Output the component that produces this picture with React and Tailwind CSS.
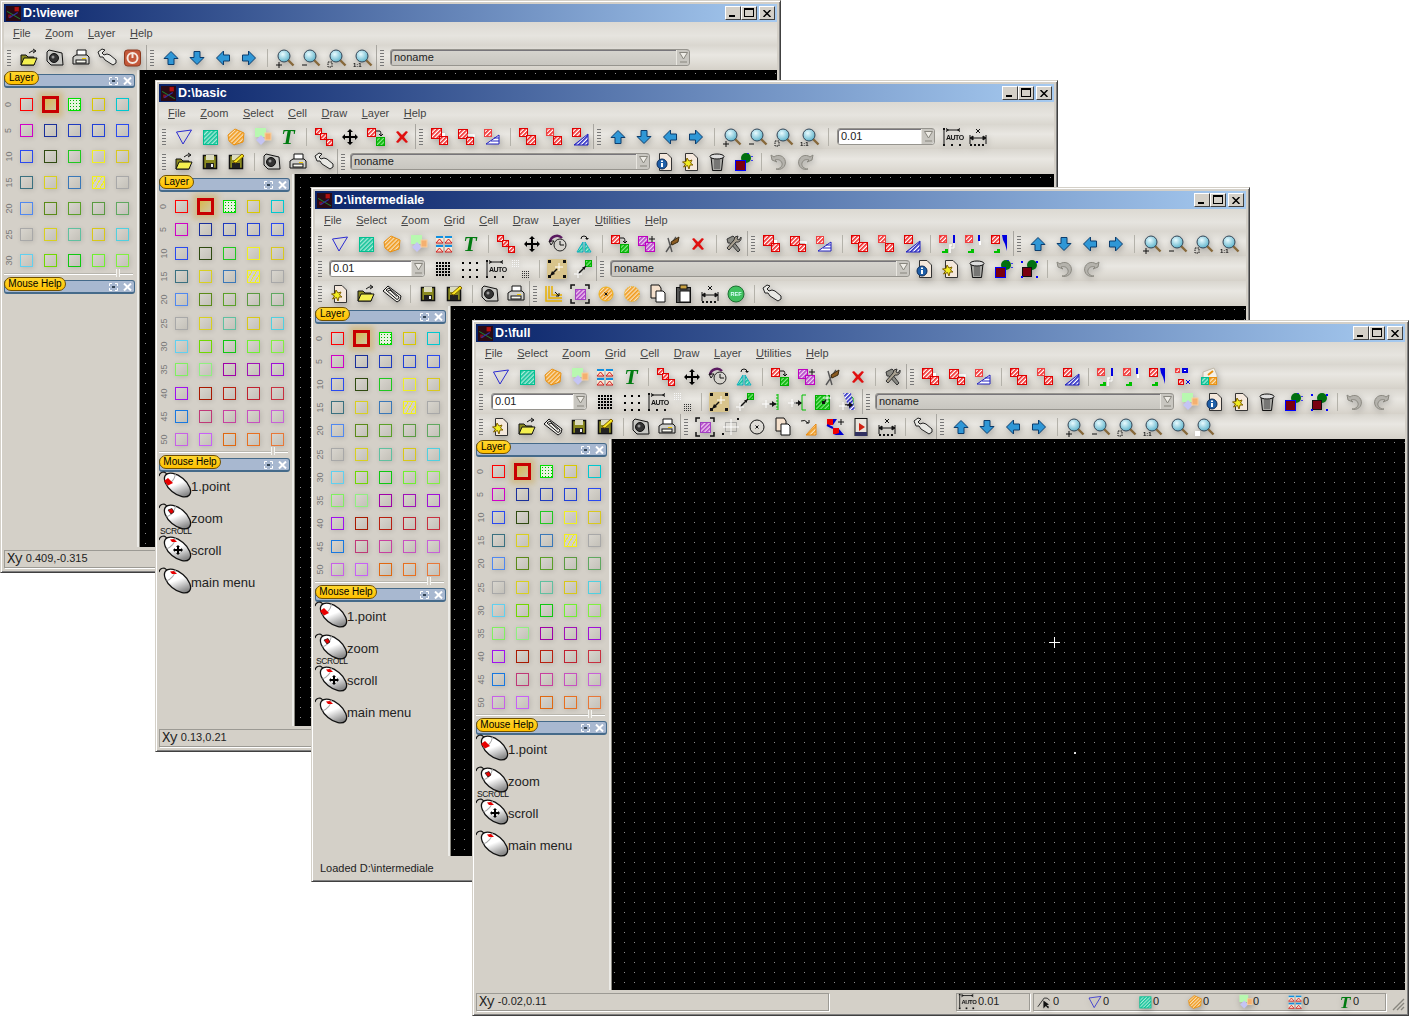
import React from "react";

const Sq = ({ x, y, s = 8, c = "#e00000", f = "hr" }) => (
    <rect x={x + 0.5} y={y + 0.5} width={s} height={s} fill={`url(#${f})`} stroke={c} />
);
const Arrow = ({ r }) => (
    <path transform={`rotate(${r} 10 10)`} d="M10 3.5L17 10.5H13V16.5H7V10.5H3Z" fill="#2f97d6" stroke="#0b3d6e" />
);
const Mag = ({ children }) => (
    <>
        <path d="M13 12L18.5 17.5" stroke="#86683a" strokeWidth="2.4" />
        <circle cx="9" cy="8" r="6" fill="url(#lens)" stroke="#345" />
        {children}
    </>
);
const Dots = ({ n, step, s, x = 2, y = 2, c = "#000" }) => (
    <>
        {Array.from({ length: n * n }).map((_, i) => (
            <rect key={i} x={x + (i % n) * step} y={y + Math.floor(i / n) * step} width={s} height={s} fill={c} />
        ))}
    </>
);
const Cross = ({ x, y, c = "#fff" }) => (
    <path d={`M${x - 4} ${y}H${x + 4}M${x} ${y - 4}V${y + 4}`} stroke={c} />
);
const Page = ({ f = "#f4e8dc" }) => <path d="M4.5 1.5H12L16.5 6V18.5H4.5Z" fill={f} stroke="#333" />;
const Steps = ({ c = "#00c000" }) => <path d="M1 19h3v-2h3v-2h3v4z" fill={c} />;

const ICONS = {
    line: <path d="M2.5 5L17.5 3L9 17Z" fill="none" stroke="#2a2ad0" />,
    rect: <Sq x={3} y={3} s={14} c="#00c090" f="ht" />,
    poly: <path d="M2 8L9 2L18 6L17 15L8 18L3 14Z" fill="url(#ho)" stroke="#e89010" />,
    shapes: (
        <>
            <rect x="3" y="1" width="11" height="9" fill="#b8f8b0" />
            <path d="M9 8L14 13L9 18L4 13Z" fill="#c4c4f4" />
            <rect x="13" y="6" width="6" height="7" fill="#f4b070" stroke="#f8d0a0" />
        </>
    ),
    array: (
        <>
            {[[2, 2], [11, 2], [2, 11], [11, 11]].map(([x, y]) => (
                <g key={`${x}${y}`}>
                    <rect x={x} y={y} width="7" height="7" fill="#f4ead8" />
                    <rect x={x} y={y} width="7" height="2" fill="#1090e0" />
                    <path d={`M${x} ${y + 7}L${x + 3.5} ${y + 3}L${x + 7} ${y + 7}Z`} fill="#f8d8c8" stroke="#d02020" />
                </g>
            ))}
        </>
    ),
    T: (
        <text x="10" y="17" textAnchor="middle" fontFamily="Liberation Serif" fontWeight="700" fontStyle="italic" fontSize="22" fill="#007a10">
            T
        </text>
    ),
    copy3: (
        <>
            <Sq x={1} y={1} s={6} />
            <Sq x={6} y={6} s={6} />
            <Sq x={12} y={12} s={6} />
        </>
    ),
    move: <path d="M10 2L13 5H11V9H15V7L18 10L15 13V11H11V15H13L10 18L7 15H9V11H5V13L2 10L5 7V9H9V5H7Z" fill="#000" />,
    rotate: (
        <>
            <path d="M2 8A7 7 0 0 1 14 4" fill="none" stroke="#5a1a60" strokeWidth="2.5" />
            <circle cx="12" cy="11" r="6" fill="none" stroke="#222" />
            <path d="M12 7V11H16M1 7H6L3 11Z" fill="none" stroke="#111" />
        </>
    ),
    mirror: (
        <>
            <path d="M9 8L3 18H9ZM11 8L17 18H11Z" fill="url(#ht)" stroke="#10b0c0" />
            <path d="M7 5A3 3 0 0 1 13 5" fill="none" stroke="#111" />
            <path d="M13 6L11 4H15Z" fill="#111" />
        </>
    ),
    moveTo: (
        <>
            <Sq x={1} y={1} />
            <Sq x={10} y={10} c="#00b000" f="hg" />
            <path d="M10 4H14Q15 5 15 8M13 7L15 9L17 7" fill="none" stroke="#111" />
        </>
    ),
    copyMulti: (
        <>
            <Sq x={2} y={2} s={9} c="#c000c0" f="hp" />
            <Sq x={9} y={8} s={9} c="#c000c0" f="hp" />
            <path d="M13 5H19M16 2V8" stroke="#111" />
        </>
    ),
    cut: (
        <>
            <path d="M4 18L14 3M10 18L6 4" stroke="#555" strokeWidth="1.4" />
            <path d="M9 8L17 3L16 8L10 11Z" fill="#8a5a20" stroke="#3a2a10" />
        </>
    ),
    del: <path d="M4 5L6 4L10 8L14 4L16 5L12 10L16 15L14 16L10 12L6 16L4 15L8 10Z" fill="#e01010" />,
    tools: (
        <>
            <path d="M3 5L9 2L12 5L9 7L16 16L14 18L6 9L4 9Z" fill="#8a8a84" stroke="#333" />
            <path d="M17 3A4 4 0 0 1 12 8L5 16L3 14L10 6A4 4 0 0 1 14 2L13 5L15 6Z" fill="#a8a090" stroke="#333" />
        </>
    ),
    b1: (
        <>
            <Sq x={1} y={1} s={10} />
            <Sq x={9} y={9} s={8} />
            <rect x="12" y="6" width="3" height="3" fill="#fff" />
        </>
    ),
    b2: (
        <>
            <Sq x={2} y={2} s={9} />
            <Sq x={10} y={10} s={7} f="hr" />
            <path d="M11.5 8H18V10" fill="none" stroke="#fff" strokeWidth="1.5" />
        </>
    ),
    b3: (
        <>
            <Sq x={2} y={2} s={7} c="#f04040" />
            <path d="M17 8V17H4Z" fill="#fff" stroke="#2020c0" />
            <path d="M12 11H17M9 14H17" stroke="#2020c0" />
        </>
    ),
    b4: (
        <>
            <Sq x={1} y={1} s={8} />
            <Sq x={8} y={8} s={9} />
        </>
    ),
    b5: (
        <>
            <Sq x={2} y={1} s={7} c="#f04040" />
            <Sq x={9} y={9} s={8} />
        </>
    ),
    b6: (
        <>
            <Sq x={2} y={1} s={8} />
            <path d="M18 7V18H4Z" fill="url(#hb)" stroke="#2020c0" />
        </>
    ),
    s1: (
        <>
            <Sq x={1} y={1} s={7} c="#f04040" />
            <Steps />
            <path d="M14 11H12V19" fill="none" stroke="#fff" strokeWidth="1.5" />
            <path d="M16 1V9" stroke="#0000e0" strokeWidth="2" />
            <path d="M16 9V14H13" fill="none" stroke="#fff" />
        </>
    ),
    s2: (
        <>
            <Sq x={1} y={1} s={7} c="#f04040" />
            <Steps />
            <path d="M15 1V7" stroke="#0000e0" strokeWidth="2" />
            <path d="M16 7V11" stroke="#fff" strokeWidth="2" />
        </>
    ),
    s3: (
        <>
            <Sq x={1} y={1} s={8} />
            <Steps />
            <path d="M12 1H17V17L15 10L13 6Z" fill="#0000e0" />
        </>
    ),
    s4: (
        <>
            <Sq x={1} y={1} s={4} c="#f04040" />
            <rect x="8" y="1" width="6" height="5" fill="#0000e0" />
            <rect x="10" y="3" width="2" height="1" fill="#fff" />
            <Sq x={4} y={12} s={5} c="#e00000" />
            <path d="M12 13L16 17M16 13L12 17" stroke="#0000e0" />
        </>
    ),
    s5: (
        <>
            <path d="M3 5L14 1L17 8L17 18H3Z" fill="#f4f0e8" stroke="#c0b8a8" />
            <Sq x={1} y={10} s={7} c="#00c090" f="ht" />
            <Sq x={9} y={10} s={7} c="#e89010" f="ho" />
            <path d="M8 8L13 4" stroke="#e89010" strokeWidth="2" />
        </>
    ),
    dense: <Dots n={5} step={3} s={2} x={3} y={3} />,
    sparse: <Dots n={3} step={7} s={2} x={3} y={3} />,
    auto: (
        <>
            <path d="M2 3V17M4 3H18M4 1.5L6.5 3L4 4.5M18 1.5L15.5 3L18 4.5" fill="none" stroke="#111" />
            <text x="4" y="13" fontFamily="Liberation Sans" fontSize="7" fontWeight="700" fill="#111" letterSpacing="-0.5">
                AUTO
            </text>
            <rect x="1" y="1" width="2" height="2" fill="#111" />
            <rect x="1" y="17" width="2" height="2" fill="#111" />
            <rect x="9" y="17" width="2" height="2" fill="#111" />
            <rect x="17" y="17" width="2" height="2" fill="#111" />
        </>
    ),
    smallDots: (
        <>
            <Dots n={4} step={2} s={1} x={1} y={1} c="#f8f8f8" />
            <Dots n={4} step={2} s={1} x={11} y={12} c="#333" />
        </>
    ),
    snapBox: (
        <>
            <rect x="0" y="0" width="20" height="20" rx="2" fill="#d8c48c" />
            <rect x="1" y="1" width="3" height="3" fill="#111" />
            <rect x="16" y="1" width="3" height="3" fill="#111" />
            <rect x="1" y="16" width="3" height="3" fill="#111" />
            <rect x="16" y="16" width="3" height="3" fill="#111" />
            <path d="M10 10L5 15" stroke="#111" strokeWidth="1.5" />
            <path d="M3 17L8 15L5 12Z" fill="#111" />
            <Cross x={12} y={8} />
        </>
    ),
    snapLine: (
        <>
            <Sq x={12} y={1} s={6} c="#00b000" f="hg" />
            <path d="M5 15L13 7" stroke="#111" strokeWidth="1.5" />
            <path d="M12 8L9 8L12 11Z" fill="#111" />
            <Cross x={5} y={15} />
        </>
    ),
    snap3: (
        <>
            <path d="M16 2V18" stroke="#00c000" strokeWidth="1" strokeDasharray="2 1" />
            <path d="M17 2V18" stroke="#00c000" />
            <path d="M8 12H15" stroke="#111" strokeWidth="1.5" />
            <path d="M15 12L11 9V15Z" fill="#111" />
            <Cross x={5} y={12} />
        </>
    ),
    snap4: (
        <>
            <path d="M19 3H15V18H19" fill="none" stroke="#00c000" />
            <path d="M7 11H14" stroke="#111" strokeWidth="1.5" />
            <path d="M15 11L11 8V14Z" fill="#111" />
            <Cross x={5} y={11} />
        </>
    ),
    snap5: (
        <>
            <Sq x={2} y={3} s={14} c="#00b000" f="hg" />
            <path d="M11 10L14 7" stroke="#111" strokeWidth="1.5" />
            <rect x="9" y="9" width="3" height="3" fill="#111" />
            <Cross x={14} y={6} />
        </>
    ),
    snap6: (
        <>
            <path d="M8 1L14 6V18" fill="none" stroke="#00b000" />
            <path d="M4 1H12L16 18H11Z" fill="url(#hb)" />
            <path d="M6 13H13" stroke="#111" strokeWidth="1.5" />
            <path d="M14 13L10 10V16Z" fill="#111" />
            <Cross x={4} y={14} />
        </>
    ),
    info: (
        <>
            <Page />
            <circle cx="7" cy="12" r="5" fill="#1f5fa8" stroke="#0b2a58" />
            <rect x="6" y="8.5" width="2" height="1.5" fill="#fff" />
            <rect x="6" y="11" width="2" height="4" fill="#fff" />
        </>
    ),
    new: (
        <>
            <Page />
            <path d="M6 6L8 9L11 8L9.5 11L12 13L9 13L8 17L6.5 13.5L2.5 15L4.5 12L1.5 10L5 9.5Z" fill="#f0ec20" stroke="#806000" />
        </>
    ),
    trash: (
        <>
            <path d="M4 5H16L14.5 18.5H5.5Z" fill="#a8a8a4" stroke="#111" />
            <ellipse cx="10" cy="4.5" rx="7" ry="2.5" fill="#ddd" stroke="#111" />
            <path d="M8 7V17M10 7V17M12 7V17" stroke="#444" />
        </>
    ),
    lay: (
        <>
            <circle cx="13" cy="6" r="5" fill="#007010" />
            <path d="M15 1V2M19 4V5M19 8V9" stroke="#0000ff" strokeWidth="1.4" />
            <rect x="2.5" y="8.5" width="10" height="10" fill="#7a0010" stroke="#0000ff" />
        </>
    ),
    laySel: (
        <>
            <circle cx="13" cy="6" r="5" fill="#007010" />
            <rect x="3.5" y="8.5" width="9" height="9" fill="#7a0010" stroke="#111" />
            <Dots n={2} step={15} s={2} x={2} y={2} c="#0000ff" />
            <rect x="2" y="17" width="2" height="2" fill="#0000ff" />
        </>
    ),
    undo: <path d="M3 8L2 3L5 5A7 7 0 1 1 7 17C11 17 14 14 13 11C12 8 9 7 6 8L8 10Z" fill="#b4b2ac" stroke="#8a8880" />,
    redo: <path d="M17 8L18 3L15 5A7 7 0 1 0 13 17C9 17 6 14 7 11C8 8 11 7 14 8L12 10Z" fill="#b4b2ac" stroke="#8a8880" />,
    save: (
        <>
            <rect x="3.5" y="3.5" width="13" height="13" fill="#8a8a20" stroke="#111" strokeWidth="1.5" />
            <rect x="6" y="3" width="8" height="5" fill="#dcdcc0" />
            <rect x="6" y="11" width="8" height="5" fill="#222" />
            <rect x="11" y="12" width="2" height="3" fill="#eee" />
        </>
    ),
    saveAs: (
        <>
            <rect x="3.5" y="3.5" width="13" height="13" fill="#8a8a20" stroke="#111" strokeWidth="1.5" />
            <rect x="6" y="3" width="8" height="5" fill="#dcdcc0" />
            <rect x="6" y="11" width="8" height="5" fill="#222" />
            <path d="M7 10L16 2L18 4L10 11Z" fill="#f8e820" stroke="#806000" />
        </>
    ),
    open: (
        <>
            <path d="M2 7H7L9 9H15V17H2Z" fill="#8a8a20" stroke="#111" />
            <path d="M2 17L5 10H18L15 17Z" fill="#f4f050" stroke="#111" />
            <path d="M10 5Q13 2 16 3M14 1L17 3L14 5" fill="none" stroke="#111" />
        </>
    ),
    clip: (
        <>
            <path d="M1 7L6 2L19 12Q19 17 15 18Z" fill="#eeece6" stroke="#111" />
            <path d="M4 6L7 4L17 13Q17 15 15 15.5Z" fill="none" stroke="#111" />
            <path d="M6 7L8 6L15 12.5" fill="none" stroke="#111" />
        </>
    ),
    camera: (
        <>
            <path d="M2 4L4 2L17 5L18 17L6 17L2 13Z" fill="#c8c8c4" stroke="#111" />
            <circle cx="9" cy="10" r="4.5" fill="#333" stroke="#111" />
            <circle cx="8" cy="9" r="1.5" fill="#999" />
        </>
    ),
    print: (
        <>
            <path d="M6 2H15V8H6Z" fill="#fff" stroke="#111" />
            <path d="M2 9L5 7H16L18 9V16H2Z" fill="#d0d0cc" stroke="#111" />
            <rect x="5" y="12" width="10" height="3" fill="#f8f8f0" stroke="#111" />
            <rect x="11" y="10" width="4" height="1" fill="#f0c800" />
        </>
    ),
    wrench: <path d="M1 4L5 1L8 2L5 5L7 7L10 6L13 7L19 12L19 15L16 17L8 12L6 9L3 9Z" fill="#e8e8e4" stroke="#222" />,
    power: (
        <>
            <rect x="1.5" y="2" width="16" height="16" rx="3" fill="#c4583a" stroke="#8a3a20" />
            <circle cx="9.5" cy="10" r="5" fill="none" stroke="#f4e8e0" strokeWidth="2" />
            <path d="M9.5 5V10" stroke="#f4e8e0" strokeWidth="2" />
        </>
    ),
    up: <Arrow r={0} />,
    down: <Arrow r={180} />,
    left: <Arrow r={270} />,
    right: <Arrow r={90} />,
    zin: (
        <Mag>
            <path d="M1 17H7M4 14V20" stroke="#111" />
        </Mag>
    ),
    zout: (
        <Mag>
            <path d="M1 17H6" stroke="#111" />
        </Mag>
    ),
    zfit: (
        <Mag>
            <path d="M1 14H5V19H1Z" fill="none" stroke="#111" strokeDasharray="1.5 1" />
        </Mag>
    ),
    zone: (
        <Mag>
            <text x="0" y="19" fontFamily="Liberation Sans" fontSize="6" fontWeight="700" fill="#111">
                1:1
            </text>
        </Mag>
    ),
    zoom: <Mag />,
    zsel: (
        <Mag>
            <rect x="0" y="14" width="5" height="5" fill="#fff" />
        </Mag>
    ),
    fit: (
        <>
            <Sq x={5} y={5} s={10} c="#a040c0" f="hp" />
            <path d="M1 5V1H5M15 1H19V5M1 15V19H5M19 15V19H15" fill="none" stroke="#111" strokeWidth="1.5" />
        </>
    ),
    cross2: (
        <>
            <rect x="4.5" y="5.5" width="11" height="9" fill="none" stroke="#777" strokeDasharray="1 1" />
            <path d="M10 2V18M2 10H18" stroke="#fff" />
            <path d="M16 1L18 3M18 1L16 3M1 16L3 18M3 16L1 18" stroke="#111" />
        </>
    ),
    circ: (
        <>
            <circle cx="10" cy="10" r="7" fill="none" stroke="#111" />
            <path d="M8.5 8.5L11.5 11.5M11.5 8.5L8.5 11.5" stroke="#111" />
        </>
    ),
    circO: (
        <>
            <circle cx="10" cy="10" r="7" fill="url(#ho)" stroke="#f0b010" />
            <path d="M8.5 8.5L11.5 11.5M11.5 8.5L8.5 11.5" stroke="#111" />
        </>
    ),
    circO2: <circle cx="10" cy="10" r="7.5" fill="url(#ho)" stroke="#f0b010" strokeDasharray="1 1" />,
    copyDoc: (
        <>
            <path d="M3 1H11L13 4V14H3Z" fill="#f4e0cc" stroke="#111" />
            <path d="M8 7H15L17 9V18H8Z" fill="#fff" stroke="#111" />
        </>
    ),
    paste: (
        <>
            <rect x="2.5" y="3.5" width="14" height="15" fill="#555" stroke="#111" />
            <rect x="6" y="1" width="7" height="4" fill="#c8a040" stroke="#111" />
            <path d="M6 7H16V18H6Z" fill="#fff" stroke="#111" />
        </>
    ),
    rotArrow: (
        <>
            <path d="M2 4Q6 2 9 6M7 6H10V3" fill="none" stroke="#111" />
            <path d="M17 7V18H7Z" fill="url(#ho)" stroke="#e88810" />
        </>
    ),
    redblue: (
        <>
            <rect x="2" y="2" width="6" height="6" fill="#f00000" />
            <path d="M8 2H12L8 8Z" fill="#0000d0" />
            <path d="M13 5H19M16 2V8" stroke="#111" />
            <rect x="8" y="11" width="6" height="6" fill="#f00000" />
            <path d="M14 12L19 18H8L14 16Z" fill="#0000d0" />
            <path d="M2 8L8 11" stroke="#0000d0" strokeWidth="2" />
        </>
    ),
    film: (
        <>
            <rect x="4" y="1.5" width="12" height="17" fill="#e8e4dc" stroke="#111" />
            <rect x="4" y="15" width="12" height="4" fill="#303060" />
            <path d="M8 6L14 10L8 14Z" fill="#d02010" />
        </>
    ),
    measure: (
        <>
            <path d="M2 8V17M18 8V17M2 11H18M2 11L5 9V13ZM18 11L15 9V13Z" fill="#111" stroke="#111" />
            <path d="M8 2L12 6M12 2L8 6" stroke="#111" />
            <path d="M2 18H18" stroke="#111" strokeWidth="2" strokeDasharray="2 2" />
        </>
    ),
    bracket: (
        <>
            <path d="M2 2V17H18M5 2V14H18M8 2V11H18" fill="none" stroke="#e8b000" strokeWidth="1.5" />
            <path d="M11 8L15 12M15 9V12H12" fill="none" stroke="#111" />
        </>
    ),
    ref: (
        <>
            <circle cx="10" cy="10" r="8" fill="#40c060" stroke="#1a7030" />
            <text x="10" y="12" textAnchor="middle" fontFamily="Liberation Sans" fontSize="5.5" fontWeight="700" fill="#dff">
                REF
            </text>
        </>
    ),
    pointer: (
        <>
            <path d="M1 16L9 5Q13 4 16 8" fill="none" stroke="#111" />
            <path d="M8 8V18L11 15L14 18L15 16L12 14L15 13Z" fill="#111" />
        </>
    ),
};

function Icon({ name, size = 20 }) {
    return (
        <svg width={size} height={size} viewBox="0 0 20 20" className="drop-shadow-[1px_2px_3px_rgba(0,0,0,0.25)] overflow-visible">
            {ICONS[name]}
        </svg>
    );
}

function Patterns() {
    const hatch = (id, bg, fg) => (
        <pattern id={id} width="3" height="3" patternUnits="userSpaceOnUse" patternTransform="rotate(45)">
            <rect width="3" height="3" fill={bg} />
            <rect width="1.6" height="3" fill={fg} />
        </pattern>
    );
    return (
        <svg className="absolute w-0 h-0">
            <defs>
                {hatch("hr", "#ffffff", "#f02020")}
                {hatch("hg", "#80e880", "#00b000")}
                {hatch("ht", "#a8ecd8", "#10c098")}
                {hatch("ho", "#f8e0b8", "#f09818")}
                {hatch("hp", "#f0d0f0", "#b040c8")}
                {hatch("hb", "#ffffff", "#2020c0")}
                <radialGradient id="lens" cx="0.4" cy="0.35" r="0.7">
                    <stop offset="0" stopColor="#e8fbff" />
                    <stop offset="1" stopColor="#58b0c8" />
                </radialGradient>
                <linearGradient id="mouse" x1="0" y1="0" x2="1" y2="0.3">
                    <stop offset="0.55" stopColor="#ffffff" />
                    <stop offset="1" stopColor="#8a8a8a" />
                </linearGradient>
            </defs>
        </svg>
    );
}

function Grip({ first }) {
    return (
        <div className={`w-[12px] h-full flex items-center shrink-0 ${first ? "" : "border-l border-l-[#a8a6a0]"}`}>
            <div className="ml-[3px] w-[4px] h-[17px] bg-[radial-gradient(circle,#777_0.6px,transparent_0.8px)] bg-[length:2px_3px]" />
        </div>
    );
}

function Combo({ width, value, white }) {
    const box = white ? "bg-white" : "bg-[linear-gradient(#d6d4ce,#c8c6c0)]";
    return (
        <div
            className={`h-[17px] rounded-[3px] border border-[#96948e] shadow-[inset_1px_1px_0_#77757a] flex items-center justify-between text-[11px] text-[#222] shrink-0 ${box}`}
            style={{ width }}
        >
            <span className="pl-[3px]">{value}</span>
            <span className="w-[13px] h-full bg-[#c8c6c0] rounded-r-[3px] border-l border-[#e8e6e0] flex flex-col items-center pt-[2px]">
                <svg width="9" height="11" viewBox="0 0 9 11">
                    <path d="M0.5 0.5H8.5L4.5 7Z" fill="#eeece6" stroke="#88867e" />
                    <path d="M1 10H8" stroke="#88867e" />
                </svg>
            </span>
        </div>
    );
}

function ToolRow({ items }) {
    return (
        <div className="h-[25px] flex items-center bg-[linear-gradient(#d9d6cf,#e9e7e2_40%,#e0ddd6_70%,#d5d1c9)]">
            {items.map((it, i) => {
                if (it === "G") return <Grip key={i} first={i === 0} />;
                if (it === "|" || it === "/")
                    return (
                        <div key={i} className={`shrink-0 flex justify-center ${it === "|" ? "w-[10px]" : "w-[9px]"}`}>
                            <div className="w-px h-[18px] bg-[#b4b2aa]" />
                        </div>
                    );
                if (typeof it === "object")
                    return (
                        <div key={i} className={it.className}>
                            <Combo width={it.width} value={it.value} white={it.white} />
                        </div>
                    );
                return (
                    <div key={i} className="w-[26px] shrink-0 flex justify-center">
                        <Icon name={it} />
                    </div>
                );
            })}
        </div>
    );
}

const CELLS = [
    ["border-[#ff0000]", "sel", "border-[#00e000] bg-[radial-gradient(circle,#00b000_0.7px,transparent_0.9px)] bg-[length:3px_3px] bg-[#e8f4e0]", "border-[#d8c800]", "border-[#00c8d0]"],
    ["border-[#d000c8]", "border-[#1a2f9a]", "border-[#1f3bbf]", "border-[#2040d8]", "border-[#2a4af0]"],
    ["border-[#2a4af0]", "border-[#2f4a10]", "border-[#20c820]", "border-[#f0f020]", "border-[#d8c820]"],
    ["border-[#3a7080]", "border-[#d8d020]", "border-[#3a78b8]", "border-[#f0f020] bg-[repeating-linear-gradient(120deg,transparent_0_3px,#f0f020_3px_4px)]", "border-[#a8a8a8]"],
    ["border-[#5088f0]", "border-[#5a8a18]", "border-[#5aa028]", "border-[#5a9a40]", "border-[#60a860]"],
    ["border-[#a8a8a8]", "border-[#d8d020]", "border-[#60c0a0]", "border-[#d8c818]", "border-[#50d0e0]"],
    ["border-[#60d0f0]", "border-[#70d800]", "border-[#10c810]", "border-[#70f030]", "border-[#80f040]"],
    ["border-[#80f060]", "border-[#90f080]", "border-[#a000a8]", "border-[#a010b8]", "border-[#a010d8]"],
    ["border-[#a010f0]", "border-[#a81800]", "border-[#b82010]", "border-[#c02030]", "border-[#c83040]"],
    ["border-[#1878e0]", "border-[#c03878]", "border-[#c840a0]", "border-[#c850c0]", "border-[#c860d8]"],
    ["border-[#c860e8]", "border-[#c860f8]", "border-[#e06810]", "border-[#e87020]", "border-[#e87838]"],
];

function LayerCell({ cls }) {
    if (cls === "sel") {
        return (
            <div className="w-[17px] h-[17px] border-[3px] border-[#c80000] bg-[linear-gradient(135deg,#d8b850,#cfc6a0)] shadow-[0_0_6px_4px_rgba(200,160,60,0.45)]" />
        );
    }
    const fill = cls.includes("bg-") ? "" : "bg-[linear-gradient(135deg,#d8d5ce,#c4c1b9)]";
    return <div className={`w-[13px] h-[13px] border shadow-[1px_1px_5px_rgba(0,0,0,0.12)] ${cls} ${fill}`} />;
}

function DockTitle({ label, pill }) {
    return (
        <div className="relative h-[17px] mt-[1px] shrink-0 w-[131px]">
            <div className="absolute top-[3px] left-0 right-0 h-[14px] bg-[#a8b8d0] border border-[#456a8a] border-b-2 rounded-[3px]" />
            <div className={`absolute top-0 left-0 h-[14px] bg-[linear-gradient(#ffd830,#ffc000)] border border-[#705000] rounded-full text-[10px] leading-[12px] text-black text-center ${pill}`}>
                {label}
            </div>
            <svg className="absolute top-[6px] right-[17px]" width="9" height="8" viewBox="0 0 9 8">
                <path d="M0.5 3V0.5H3M6 0.5H8.5V3M0.5 5V7.5H3M6 7.5H8.5V5" fill="none" stroke="#fff" />
                <rect x="3" y="3" width="3" height="2" fill="#345" />
            </svg>
            <svg className="absolute top-[6px] right-[3px]" width="9" height="8" viewBox="0 0 9 8">
                <path d="M1 0.5L8 7.5M8 0.5L1 7.5" stroke="#fff" strokeWidth="2" />
            </svg>
        </div>
    );
}

function MouseIcon({ kind }) {
    return (
        <svg width="32" height="26" viewBox="0 0 32 26" className="shrink-0 overflow-visible">
            <path d="M0 4Q1 0 5 0Q8 1 9 5" fill="none" stroke="#111" strokeWidth="1.2" />
            <g transform="rotate(40 18.5 13)">
                <ellipse cx="18.5" cy="13" rx="15.5" ry="8.5" fill="url(#mouse)" stroke="#111" strokeWidth="1.3" />
                <path d="M10 6Q14 13 10 20" fill="none" stroke="#aaa" />
            </g>
            {kind === "left" && <path d="M5 9L9 6L14 11L9 13.5Z" fill="#e80000" />}
            {kind === "mid" && <path d="M9 6L13 4.5L15 8L12 10Z" fill="#e80000" stroke="#111" strokeWidth="0.7" />}
            {(kind === "menu" || kind === "scroll") && <path d="M11 3.5L15 3L18 6L13 6Z" fill="#e80000" />}
            {kind === "scroll" && (
                <path d="M19 9L21 11H20V13H22V12L24 14L22 16V15H20V17H21L19 19L17 17H18V15H16V16L14 14L16 12V13H18V11H17Z" fill="#000" />
            )}
        </svg>
    );
}

function MouseHelp() {
    const rows = [
        ["left", "1.point"],
        ["mid", "zoom"],
        ["scroll", "scroll"],
        ["menu", "main menu"],
    ];
    return (
        <div className="relative">
            {rows.map(([kind, label]) => (
                <div key={label} className="relative h-[32px] flex items-start">
                    {kind === "scroll" && (
                        <span className="absolute -top-[9px] left-[1px] text-[8.5px] leading-[8px] tracking-[-0.4px] text-[#111]">SCROLL</span>
                    )}
                    <MouseIcon kind={kind} />
                    <span className="text-[13px] leading-[30px] text-[#222]">{label}</span>
                </div>
            ))}
        </div>
    );
}

function Dock({ rows, rowClass, help }) {
    return (
        <aside className="w-[133px] shrink-0 bg-[#d4d0c8] flex flex-col">
            <DockTitle label="Layer" pill="w-[35px]" />
            <div className="mt-[3px]">
                {CELLS.slice(0, rows).map((row, r) => (
                    <div key={r} className={`flex items-center ${rowClass}`}>
                        <div className="w-[10px] flex justify-center">
                            <span className="-rotate-90 text-[9px] leading-none text-[#777]">{r * 5}</span>
                        </div>
                        {row.map((cls, c) => (
                            <div key={c} className="w-[24px] flex justify-center">
                                <LayerCell cls={cls} />
                            </div>
                        ))}
                    </div>
                ))}
            </div>
            <div className="relative h-[3px] shrink-0 w-[129px]">
                <div className="absolute left-0 right-0 top-0 h-[2px] bg-[#b8b6ae] border-b border-white" />
                <div className="absolute top-[-4px] left-[112px] w-[4px] h-[8px] bg-[#d4d0c8] border-x border-[#f4f4f0]" />
            </div>
            <DockTitle label="Mouse Help" pill="w-[62px]" />
            {help && <MouseHelp />}
        </aside>
    );
}

function Canvas({ className, children }) {
    return <div className={`relative flex-1 ${className}`}>{children}</div>;
}

function Sunken({ className, children }) {
    return (
        <div className={`h-[18px] border border-[#9c9a94] shadow-[1px_1px_0_#fff] flex items-center text-[11px] text-[#222] ${className}`}>
            {children}
        </div>
    );
}

function XyLabel({ value }) {
    return (
        <>
            <span className="font-['Liberation_Mono'] text-[14px] leading-[14px] ml-px">X</span>
            <span className="font-['Liberation_Mono'] text-[14px] leading-[14px] mr-[3px] -ml-px">y</span>
            {value}
        </>
    );
}

function Window({ className, title, menu, menuClass = "h-[22px]", toolbars, rows, rowClass, canvasClass, canvas, help, status }) {
    return (
        <section
            className={`absolute flex flex-col p-[3px] bg-[#d4d0c8] border border-t-[#d4d0c8] border-l-[#d4d0c8] border-r-[#404040] border-b-[#404040] shadow-[inset_1px_1px_0_#fff,inset_-1px_-1px_0_#808080] ${className}`}
        >
            <header className="h-[18px] shrink-0 flex items-center pl-[2px] pr-[2px] bg-[linear-gradient(90deg,#0a246a,#a6caf0)]">
                <svg width="15" height="15" viewBox="0 0 14 14" className="mr-[2px]">
                    <rect width="14" height="14" fill="#2a0a14" />
                    <rect x="8" y="1" width="4" height="4" fill="#b01010" />
                    <rect x="2" y="8" width="3" height="3" fill="#801020" />
                    <path d="M1 5L13 12" stroke="#208030" />
                    <path d="M3 11L11 6" stroke="#3030a0" />
                </svg>
                <span className="text-[12.5px] font-bold text-white">{title}</span>
                <div className="ml-auto flex items-center">
                    {["min", "max"].map((b) => (
                        <div key={b} className="w-[16px] h-[14px] bg-[#d4d0c8] border border-t-white border-l-white border-r-[#404040] border-b-[#404040] relative">
                            {b === "min" && <div className="absolute left-[3px] bottom-[2px] w-[6px] h-[2px] bg-black" />}
                            {b === "max" && <div className="absolute left-[2px] top-[1px] w-[10px] h-[9px] border border-black border-t-2" />}
                        </div>
                    ))}
                    <div className="w-[16px] h-[14px] ml-[2px] bg-[#d4d0c8] border border-t-white border-l-white border-r-[#404040] border-b-[#404040] flex items-center justify-center">
                        <svg width="8" height="7" viewBox="0 0 8 7">
                            <path d="M0.5 0L7.5 7M7.5 0L0.5 7" stroke="#000" strokeWidth="1.5" />
                        </svg>
                    </div>
                </div>
            </header>
            <nav className={`shrink-0 flex items-center gap-[14.5px] pl-[9px] text-[11px] text-[#444] bg-[linear-gradient(#dcd9d2,#e6e4df_60%,#dad7d0)] ${menuClass}`}>
                {menu.map((m) => (
                    <span key={m}>
                        <span className="underline">{m[0]}</span>
                        {m.slice(1)}
                    </span>
                ))}
            </nav>
            {toolbars.map((t, i) => (
                <ToolRow key={i} items={t} />
            ))}
            <div className="flex-1 flex min-h-0 overflow-hidden">
                <Dock rows={rows} rowClass={rowClass} help={help} />
                <div className="w-[3px] shrink-0 bg-[#ecebe7] border-r border-[#8a8880]" />
                <Canvas className={canvasClass}>{canvas}</Canvas>
            </div>
            <footer className="h-[22px] shrink-0 flex items-center pt-[1px] bg-[#d4d0c8]">{status}</footer>
        </section>
    );
}

const combo = (width, value, white, className) => ({ width, value, white, className });
const ZOOMS = ["zin", "zout", "zfit", "zone"];
const ARROWS = ["up", "down", "left", "right"];

const STATUS_ITEMS = ["pointer", "line", "rect", "poly", "shapes", "array", "T"];

export default function App() {
    return (
        <div className="relative w-[1409px] h-[1016px] overflow-hidden bg-white font-['Liberation_Sans',sans-serif]">
            <Patterns />
            <Window
                className="left-0 top-0 w-[781px] h-[573px]"
                title="D:\viewer"
                menu={["File", "Zoom", "Layer", "Help"]}
                menuClass="h-[23px]"
                toolbars={[["G", "open", "camera", "print", "wrench", "power", "G", ...ARROWS, "|", ...ZOOMS, "G", combo(300, "noname", false, "ml-[2px]")]]}
                rows={7}
                rowClass="h-[26px]"
                canvasClass="bg-[radial-gradient(circle_at_5.5px_3.5px,#8a8a8a_0.7px,#000_0.9px)] bg-[length:10px_10px]"
                status={
                    <Sunken className="w-[300px] pl-px">
                        <XyLabel value="0.409,-0.315" />
                    </Sunken>
                }
            />
            <Window
                className="left-[155px] top-[80px] w-[903px] h-[672px]"
                title="D:\basic"
                menu={["File", "Zoom", "Select", "Cell", "Draw", "Layer", "Help"]}
                toolbars={[
                    ["G", "line", "rect", "poly", "shapes", "T", "|", "copy3", "move", "moveTo", "del", "G", "b1", "b2", "b3", "|", "b4", "b5", "b6", "G", ...ARROWS, "|", ...ZOOMS, "|", combo(98, "0.01", true, "ml-[4px] mr-[4px]"), "auto", "measure"],
                    ["G", "open", "save", "saveAs", "|", "camera", "print", "wrench", "G", combo(300, "noname", false, "ml-[1px] mr-[2px]"), "info", "new", "trash", "lay", "|", "undo", "redo"],
                ]}
                rows={11}
                rowClass="h-[23.3px]"
                canvasClass="bg-[radial-gradient(circle_at_5.5px_3.5px,#8a8a8a_0.7px,#000_0.9px)] bg-[length:10px_10px]"
                help
                status={
                    <Sunken className="w-[300px] pl-px">
                        <XyLabel value="0.13,0.21" />
                    </Sunken>
                }
            />
            <Window
                className="left-[311px] top-[187px] w-[939px] h-[695px]"
                title="D:\intermediale"
                menu={["File", "Select", "Zoom", "Grid", "Cell", "Draw", "Layer", "Utilities", "Help"]}
                toolbars={[
                    ["G", "line", "rect", "poly", "shapes", "array", "T", "|", "copy3", "move", "rotate", "mirror", "|", "moveTo", "copyMulti", "cut", "del", "|", "tools", "G", "b1", "b2", "b3", "|", "b4", "b5", "b6", "|", "s1", "s2", "s3", "G", ...ARROWS, "|", ...ZOOMS],
                    ["G", combo(96, "0.01", true, "ml-[2px] mr-[5px]"), "dense", "sparse", "auto", "smallDots", "|", "snapBox", "snapLine", "G", combo(300, "noname", false, "ml-[2px] mr-[2px]"), "info", "new", "trash", "lay", "laySel", "|", "undo", "redo"],
                    ["G", "new", "open", "clip", "|", "save", "saveAs", "|", "camera", "print", "G", "bracket", "fit", "circO", "circO2", "copyDoc", "paste", "measure", "ref", "|", "wrench"],
                ]}
                rows={11}
                rowClass="h-[23.1px]"
                canvasClass="bg-[radial-gradient(circle_at_3.5px_3.5px,#8a8a8a_0.7px,#000_0.9px)] bg-[length:10px_10px]"
                help
                status={<span className="text-[11px] text-[#222] pl-[5px] pt-[2px]">Loaded D:\intermediale</span>}
            />
            <Window
                className="left-[472px] top-[320px] w-[937px] h-[696px]"
                title="D:\full"
                menu={["File", "Select", "Zoom", "Grid", "Cell", "Draw", "Layer", "Utilities", "Help"]}
                toolbars={[
                    ["G", "line", "rect", "poly", "shapes", "array", "T", "/", "copy3", "move", "rotate", "mirror", "|", "moveTo", "copyMulti", "cut", "del", "/", "tools", "G", "b1", "b2", "b3", "|", "b4", "b5", "b6", "/", "s1", "s2", "s3", "s4", "s5"],
                    ["G", combo(96, "0.01", true, "ml-[3px] mr-[5px]"), "dense", "sparse", "auto", "smallDots", "|", "snapBox", "snapLine", "snap3", "snap4", "snap5", "snap6", "G", combo(299, "noname", false, "ml-[1px] mr-[2px]"), "shapes", "info", "new", "trash", "lay", "laySel", "|", "undo", "redo"],
                    ["G", "new", "open", "clip", "save", "saveAs", "|", "camera", "print", "G", "fit", "cross2", "circ", "copyDoc", "rotArrow", "redblue", "film", "measure", "|", "wrench", "G", ...ARROWS, "|", ...ZOOMS, "zoom", "zsel"],
                ]}
                rows={11}
                rowClass="h-[23.1px]"
                canvasClass="bg-[radial-gradient(circle_at_2.5px_3.5px,#8a8a8a_0.7px,#000_0.9px)] bg-[length:10px_10px]"
                help
                canvas={
                    <>
                        <div className="absolute left-[437px] top-[203px] w-[11px] h-px bg-white" />
                        <div className="absolute left-[442px] top-[198px] w-px h-[11px] bg-white" />
                        <div className="absolute left-[462px] top-[313px] w-[2px] h-[2px] bg-[#ddd]" />
                    </>
                }
                status={
                    <div className="flex items-center w-full">
                        <Sunken className="w-[353px] pl-px">
                            <XyLabel value="-0.02,0.11" />
                        </Sunken>
                        <Sunken className="w-[74px] ml-[127px] pl-px gap-[3px]">
                            <Icon name="auto" size={17} />
                            0.01
                        </Sunken>
                        <Sunken className="w-[353px] ml-[3px] pl-[3px]">
                            {STATUS_ITEMS.map((n) => (
                                <div key={n} className="w-[50px] flex items-center shrink-0">
                                    <Icon name={n} size={16} />0
                                </div>
                            ))}
                        </Sunken>
                        <svg width="14" height="14" viewBox="0 0 14 14" className="ml-auto mt-[4px]">
                            <path d="M2 13L13 2M6 13L13 6M10 13L13 10" stroke="#88867e" strokeWidth="1.4" />
                        </svg>
                    </div>
                }
            />
        </div>
    );
}
